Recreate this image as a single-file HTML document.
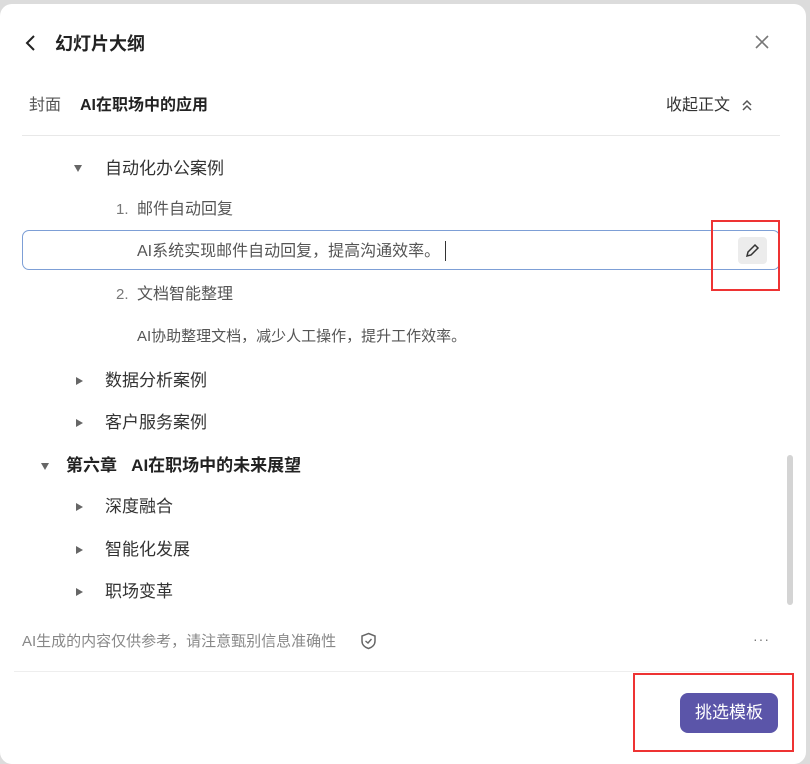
<!DOCTYPE html>
<html><head><meta charset="utf-8"><style>
body{margin:0;width:810px;height:753px;background:#dcdcdc;font-family:"Liberation Sans","Noto Sans CJK SC",sans-serif;overflow:hidden;position:relative}
.card{position:absolute;left:0;top:4px;width:806px;height:760px;background:#fff;border-radius:12px}
.t{position:absolute;white-space:nowrap;line-height:1;color:#333;font-size:16px}
.m{font-size:17px}
.tri{position:absolute;width:0;height:0}
.down{border-left:4px solid transparent;border-right:4px solid transparent;border-top:7px solid #666}
.right{border-top:4px solid transparent;border-bottom:4px solid transparent;border-left:7px solid #666}
</style></head><body>
<div class="card"></div>
<svg style="position:absolute;left:24px;top:34px" width="14" height="18"><path d="M10 2 L3 9 L10 16" stroke="#222" stroke-width="2" fill="none"/></svg>
<div class="t" style="left:55px;top:35px;font-size:18px;font-weight:bold;color:#222">幻灯片大纲</div>
<svg style="position:absolute;left:754px;top:34px" width="16" height="16"><path d="M2 2L14 14M14 2L2 14" stroke="#777" stroke-width="1.6"/></svg>
<div class="t" style="left:29px;top:98px;color:#555">封面</div>
<div class="t" style="left:80px;top:98px;font-weight:bold;color:#222">AI在职场中的应用</div>
<div class="t" style="left:666px;top:98px;color:#333">收起正文</div>
<svg style="position:absolute;left:740px;top:98px" width="14" height="14"><path d="M3 7L7 3L11 7M3 12L7 8L11 12" stroke="#555" stroke-width="1.5" fill="none"/></svg>
<div style="position:absolute;left:22px;top:135px;width:758px;height:1px;background:#e8e8e8"></div>
<div class="tri down" style="left:74px;top:165px"></div>
<div class="t m" style="left:105px;top:160px">自动化办公案例</div>
<div class="t" style="left:116px;top:202px;color:#777;font-size:15px">1.</div>
<div class="t" style="left:137px;top:202px;color:#555">邮件自动回复</div>
<div style="position:absolute;left:22px;top:230px;width:756px;height:38px;border:1.5px solid #7d9fd6;border-radius:7px"></div>
<div class="t" style="left:137px;top:244px;color:#555">AI系统实现邮件自动回复，提高沟通效率。</div>
<div style="position:absolute;left:445px;top:241px;width:1px;height:20px;background:#333"></div>
<div style="position:absolute;left:738px;top:237px;width:29px;height:27px;background:#ececec;border-radius:4px"></div>
<svg style="position:absolute;left:743px;top:241px" width="19" height="19"><path d="M4 15L5 11L12 4L15 7L8 14Z" stroke="#333" stroke-width="1.5" fill="none"/></svg>
<div style="position:absolute;left:711px;top:220px;width:65px;height:67px;border:2px solid #e33"></div>
<div class="t" style="left:116px;top:287px;color:#777;font-size:15px">2.</div>
<div class="t" style="left:137px;top:287px;color:#555">文档智能整理</div>
<div class="t" style="left:137px;top:329px;color:#555;font-size:15px">AI协助整理文档，减少人工操作，提升工作效率。</div>
<div class="tri right" style="left:76px;top:377px"></div>
<div class="t m" style="left:105px;top:372px">数据分析案例</div>
<div class="tri right" style="left:76px;top:419px"></div>
<div class="t m" style="left:105px;top:414px">客户服务案例</div>
<div class="tri down" style="left:41px;top:463px"></div>
<div class="t m" style="left:66px;top:457px;font-weight:bold;color:#222">第六章&nbsp;&nbsp;&nbsp;AI在职场中的未来展望</div>
<div class="tri right" style="left:76px;top:503px"></div>
<div class="t m" style="left:105px;top:498px">深度融合</div>
<div class="tri right" style="left:76px;top:546px"></div>
<div class="t m" style="left:105px;top:541px">智能化发展</div>
<div class="tri right" style="left:76px;top:588px"></div>
<div class="t m" style="left:105px;top:583px">职场变革</div>
<div style="position:absolute;left:787px;top:455px;width:6px;height:150px;background:#d4d4d4;border-radius:3px"></div>
<div class="t" style="left:22px;top:634px;color:#888;font-size:15px">AI生成的内容仅供参考，请注意甄别信息准确性</div>
<svg style="position:absolute;left:360px;top:632px" width="17" height="18"><path d="M8.5 1.5L15 4V9C15 13 12 15.5 8.5 16.5C5 15.5 2 13 2 9V4Z" stroke="#666" stroke-width="1.5" fill="none"/><path d="M5.5 9L8 11L11.5 7" stroke="#666" stroke-width="1.4" fill="none"/></svg>
<div class="t" style="left:753px;top:632px;color:#777;font-size:14px;letter-spacing:1px">···</div>
<div style="position:absolute;left:14px;top:671px;width:766px;height:1px;background:#eee"></div>
<div style="position:absolute;left:680px;top:693px;width:98px;height:40px;background:#5b55a9;border-radius:8px;color:#fff;font-size:17px;line-height:40px;text-align:center">挑选模板</div>
<div style="position:absolute;left:633px;top:673px;width:157px;height:75px;border:2px solid #e33"></div>
</body></html>
